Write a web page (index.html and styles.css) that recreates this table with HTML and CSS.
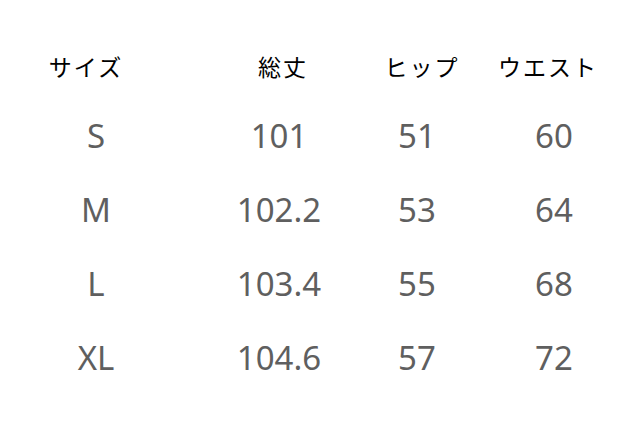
FILE: index.html
```html
<!DOCTYPE html>
<html lang="ja">
<head>
<meta charset="utf-8">
<title>サイズ表</title>
<link rel="stylesheet" href="styles.css">
</head>
<body>
<div class="chart">
  <div class="row head">
    <div class="cell h1">サイズ</div>
    <div class="cell h2">総丈</div>
    <div class="cell h3">ヒップ</div>
    <div class="cell h4">ウエスト</div>
  </div>
  <div class="row data">
    <div class="cell d1">S</div>
    <div class="cell d2">101</div>
    <div class="cell d3">51</div>
    <div class="cell d4">60</div>
  </div>
  <div class="row data">
    <div class="cell d1">M</div>
    <div class="cell d2">102.2</div>
    <div class="cell d3">53</div>
    <div class="cell d4">64</div>
  </div>
  <div class="row data">
    <div class="cell d1">L</div>
    <div class="cell d2">103.4</div>
    <div class="cell d3">55</div>
    <div class="cell d4">68</div>
  </div>
  <div class="row data">
    <div class="cell d1">XL</div>
    <div class="cell d2">104.6</div>
    <div class="cell d3">57</div>
    <div class="cell d4">72</div>
  </div>
</div>
</body>
</html>
```
FILE: styles.css
```css
html, body {
  margin: 0;
  padding: 0;
  background: #ffffff;
  overflow: hidden;
}
.chart {
  width: 640px;
  height: 437px;
  padding-top: 46px;
  box-sizing: border-box;
}
.row {
  display: flex;
}
.cell {
  display: flex;
  justify-content: center;
  flex-shrink: 0;
  white-space: nowrap;
}
.head {
  height: 40px;
  line-height: 40px;
  margin-bottom: 13px;
  font-family: "Noto Sans CJK JP", sans-serif;
  font-size: 23px;
  letter-spacing: 2px;
  color: #000000;
}
.h1 { width: 172px; }
.h2 { width: 222px; }
.h3 { width: 56px; }
.h4 { width: 196px; }
.data {
  height: 74px;
  line-height: 74px;
  font-family: "Noto Sans", sans-serif;
  font-size: 33px;
  color: #5f5f5f;
}
.d1 { width: 192px; }
.d2 { width: 174px; }
.d3 { width: 102px; }
.d4 { width: 172px; }
```
